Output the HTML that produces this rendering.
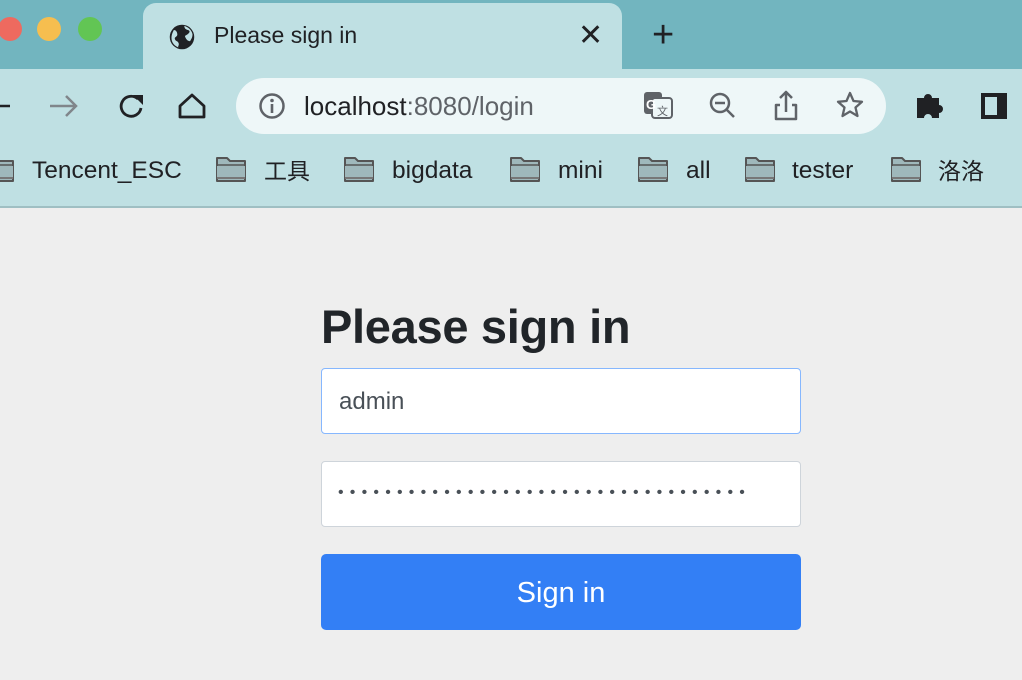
<!DOCTYPE html>
<html><head><meta charset="utf-8"><style>
body{margin:0;width:1022px;height:680px;overflow:hidden;background:#eeeeee;font-family:"Liberation Sans","Noto Sans CJK SC",sans-serif;position:relative}
.strip{position:absolute;left:0;top:0;width:1022px;height:69px;background:#72b5bf}
.tb{position:absolute;left:0;top:69px;width:1022px;height:137px;background:#bfe0e3;border-bottom:2px solid #9fbfc3}
.tab{position:absolute;left:143px;top:3px;width:479px;height:70px;background:#bfe0e3;border-radius:13px 13px 0 0}
.dot{position:absolute;top:17px;width:24px;height:24px;border-radius:50%}
.omni{position:absolute;left:236px;top:78px;width:650px;height:56px;background:#eef7f8;border-radius:28px}
.t{position:absolute;color:#202124;white-space:nowrap}
.bm{position:absolute;top:157px;font-size:24.5px;color:#202124}
.cj{font-family:"Noto Sans CJK SC",sans-serif;top:152px;font-size:23px}
.in{position:absolute;left:321px;width:478px;height:64px;background:#fff;border:1px solid #ced4da;border-radius:4px}
</style></head><body>
<div class="strip"></div>
<div class="tb"></div>
<div class="tab"></div>
<div class="omni"></div>
<div class="dot" style="left:-2px;background:#ee6a5f"></div>
<div class="dot" style="left:37px;background:#f6be4f"></div>
<div class="dot" style="left:78px;background:#62c554"></div>
<svg style="position:absolute;left:168px;top:23px" width="28" height="28" viewBox="0 0 24 24"><circle cx="12" cy="12" r="10.5" fill="#202124"/><path d="M5 6c2 0 3 2 3 4s-3 2-2 4 2 1 3 3-1 3 0 4c-3-1-6-4-6-8 0-3 1-5 2-7zM14 2.5c0 2 1 3 3 3.5s2 2 0 3.5-3 1-2 3 2 3 4 3c1-2 2-3 2-6-1-4-4-6-7-7z" fill="#bfe0e3"/></svg>
<div class="t" style="left:214px;top:22px;font-size:23px">Please sign in</div>
<div class="t" style="left:578px;top:18px;font-size:30px">✕</div>
<div class="t" style="left:652px;top:14px;font-size:38px;font-weight:300">+</div>
<svg style="position:absolute;left:0;top:90px" width="240" height="32" viewBox="0 0 240 32">
<path d="M-4 16h14" stroke="#202124" stroke-width="2.5" fill="none"/>
<path d="M50 16h26M66 6l10 10-10 10" stroke="#80868b" stroke-width="2.5" fill="none"/>
<path d="M138 9a10 10 0 1 0 3 9" stroke="#202124" stroke-width="2.8" fill="none"/><path d="M133 5h10v10z" fill="#202124"/>
<path d="M180 16l12-11 12 11v11h-24z" stroke="#202124" stroke-width="2.8" fill="none" stroke-linejoin="round"/>
</svg>
<svg style="position:absolute;left:258px;top:92px" width="28" height="28" viewBox="0 0 28 28"><circle cx="14" cy="14" r="11.5" stroke="#5f6368" stroke-width="2.5" fill="none"/><circle cx="14" cy="8.5" r="1.8" fill="#5f6368"/><rect x="12.7" y="12" width="2.6" height="9" fill="#5f6368"/></svg>
<div class="t" style="left:304px;top:91px;font-size:26px">localhost<span style="color:#5f6368">:8080/login</span></div>
<svg style="position:absolute;left:640px;top:88px" width="240" height="36" viewBox="0 0 240 36">
<rect x="4" y="4" width="18" height="22" rx="3" fill="#5f6368"/><rect x="12" y="10" width="20" height="20" rx="3" fill="#eef7f8" stroke="#5f6368" stroke-width="2"/><text x="6" y="21" font-size="13" font-weight="bold" fill="#fff" font-family="Liberation Sans">G</text><text x="17" y="27" font-size="11" fill="#5f6368" font-family="Liberation Sans">文</text>
<circle cx="80" cy="15" r="9" stroke="#5f6368" stroke-width="2.5" fill="none"/><path d="M75 15h10M87 22l7 7" stroke="#5f6368" stroke-width="2.5"/>
<path d="M140 17h-4v14h20v-14h-4M146 24v-20M140 10l6-6 6 6" stroke="#5f6368" stroke-width="2.5" fill="none" stroke-linejoin="round"/>
<path d="M210 5l3.5 8 8.5 .8-6.5 5.7 2 8.5-7.5-4.5-7.5 4.5 2-8.5-6.5-5.7 8.5-.8z" stroke="#5f6368" stroke-width="2.3" fill="none" stroke-linejoin="round"/>
</svg>
<svg style="position:absolute;left:914px;top:90px" width="100" height="32" viewBox="0 0 100 32">
<path d="M3 10h7a4 4 0 1 1 8 0h7v7a4 4 0 1 1 0 8v5h-7a4 4 0 1 0-8 0h-7z" fill="#202124" transform="translate(0,-2)"/>
<rect x="67" y="3" width="26" height="26" fill="#202124"/><rect x="71" y="7" width="12" height="18" fill="#bfe0e3"/>
</svg>
<svg style="position:absolute;left:0;top:0" width="1022" height="200">
<defs><g id="f"><path d="M1 1h10l3 3h15v20h-28z" fill="#9fb8bb" stroke="#555" stroke-width="2" stroke-linejoin="round"/><path d="M1 8h28" stroke="#555" stroke-width="1.5"/><rect x="1" y="9" width="28" height="12" fill="#9fb8bb"/><path d="M1 21h28" stroke="#777" stroke-width="2"/></g></defs>
<use href="#f" x="-16" y="157"/><use href="#f" x="216" y="157"/><use href="#f" x="344" y="157"/><use href="#f" x="510" y="157"/><use href="#f" x="638" y="157"/><use href="#f" x="745" y="157"/><use href="#f" x="891" y="157"/>
</svg>
<div class="bm" style="left:32px">Tencent_ESC</div>
<div class="bm cj" style="left:264px">工具</div>
<div class="bm" style="left:392px">bigdata</div>
<div class="bm" style="left:558px">mini</div>
<div class="bm" style="left:686px">all</div>
<div class="bm" style="left:792px">tester</div>
<div class="bm cj" style="left:938px">洛洛</div>

<div class="t" style="left:321px;top:299px;font-size:47px;color:#212529;font-weight:bold;letter-spacing:-0.3px">Please sign in</div>
<div class="in" style="top:368px;border-color:#86b7fe"></div>
<div class="t" style="left:339px;top:388px;font-size:24px;color:#495057">admin</div>
<div class="in" style="top:461px"></div>
<div class="t" style="left:338px;top:484px;font-size:16px;color:#495057;letter-spacing:6.2px">•••••••••••••••••••••••••••••••••••</div>
<div style="position:absolute;left:321px;top:554px;width:480px;height:76px;background:#337ff5;border-radius:5px;color:#fff;font-size:29px;text-align:center;line-height:78px">Sign in</div>
</body></html>
